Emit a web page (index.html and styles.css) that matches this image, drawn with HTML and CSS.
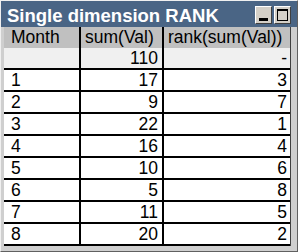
FILE: index.html
```html
<!DOCTYPE html>
<html>
<head>
<meta charset="utf-8">
<link rel="stylesheet" href="styles.css">
</head>
<body>
<div class="window">
  <div class="caption">
    <span class="title">Single dimension RANK</span>
    <div class="buttons">
      <div class="btn"><span class="min"></span></div>
      <div class="btn"><span class="max"></span></div>
    </div>
  </div>
  <div class="body">
    <div class="row head">
      <div class="c c1">Month</div>
      <div class="c c2">sum(Val)</div>
      <div class="c c3">rank(sum(Val))</div>
    </div>
    <div class="row total">
      <div class="c c1"></div>
      <div class="c c2 num">110</div>
      <div class="c c3 num">-</div>
    </div>
    <div class="row"><div class="c c1">1</div><div class="c c2 num">17</div><div class="c c3 num">3</div></div>
    <div class="row"><div class="c c1">2</div><div class="c c2 num">9</div><div class="c c3 num">7</div></div>
    <div class="row"><div class="c c1">3</div><div class="c c2 num">22</div><div class="c c3 num">1</div></div>
    <div class="row"><div class="c c1">4</div><div class="c c2 num">16</div><div class="c c3 num">4</div></div>
    <div class="row"><div class="c c1">5</div><div class="c c2 num">10</div><div class="c c3 num">6</div></div>
    <div class="row"><div class="c c1">6</div><div class="c c2 num">5</div><div class="c c3 num">8</div></div>
    <div class="row"><div class="c c1">7</div><div class="c c2 num">11</div><div class="c c3 num">5</div></div>
    <div class="row"><div class="c c1">8</div><div class="c c2 num">20</div><div class="c c3 num">2</div></div>
  </div>
</div>
</body>
</html>
```
FILE: styles.css
```css
html, body {
  margin: 0;
  padding: 0;
  background: #ffffff;
}
.window {
  box-sizing: border-box;
  width: 298px;
  height: 252px;
  background: #cfcfcf;
  border-top: 1px solid #f0f0f0;
  border-left: 1px solid #f0f0f0;
  border-right: 1px solid #606060;
  border-bottom: 1px solid #606060;
  display: flex;
  flex-direction: column;
  font-family: "Liberation Sans", Arial, sans-serif;
}
.caption {
  height: 26px;
  flex: none;
  background: #4a6585;
  display: flex;
  align-items: center;
  justify-content: space-between;
  padding: 0 6px 0 6px;
}
.title {
  color: #ffffff;
  font-weight: bold;
  font-size: 18.5px;
  line-height: 18px;
  padding-top: 4px;
  white-space: nowrap;
}
.buttons {
  display: flex;
  gap: 2px;
  padding-top: 1px;
}
.btn {
  box-sizing: border-box;
  width: 17px;
  height: 18px;
  background: #d4d0c8;
  border-top: 1px solid #ffffff;
  border-left: 1px solid #ffffff;
  border-right: 1px solid #404040;
  border-bottom: 1px solid #404040;
  position: relative;
}
.min {
  position: absolute;
  left: 3px;
  bottom: 2px;
  width: 9px;
  height: 3px;
  background: #000;
}
.max {
  position: absolute;
  left: 2px;
  top: 2px;
  width: 9px;
  height: 9px;
  border: 1px solid #000;
  border-top-width: 2px;
}
.body {
  flex: 1;
  margin: 0 6px 5px 3px;
  overflow: hidden;
  border-right: 1px solid #404040;
  background: #ffffff;
}
.row {
  display: flex;
  height: 20px;
  border-bottom: 2px solid #000;
  font-size: 17.5px;
  line-height: 20px;
  color: #000;
  background: #ffffff;
}
.row.head {
  height: 21px;
  line-height: 21px;
  border-bottom: none;
  background: #c0c0c0;
}
.row.total {
  height: 20px;
  line-height: 20px;
  background: #f0f0f0;
}
.c {
  box-sizing: border-box;
  white-space: nowrap;
  overflow: hidden;
}
.c1 {
  width: 77px;
  border-right: 2px solid #000;
  padding-left: 7px;
}
.c2 {
  width: 83px;
  border-right: 2px solid #000;
  padding-left: 4px;
}
.c3 {
  flex: 1;
  padding-left: 4px;
}
.num {
  text-align: right;
  padding-right: 4px;
}
.c3.num {
  padding-right: 3px;
}
```
